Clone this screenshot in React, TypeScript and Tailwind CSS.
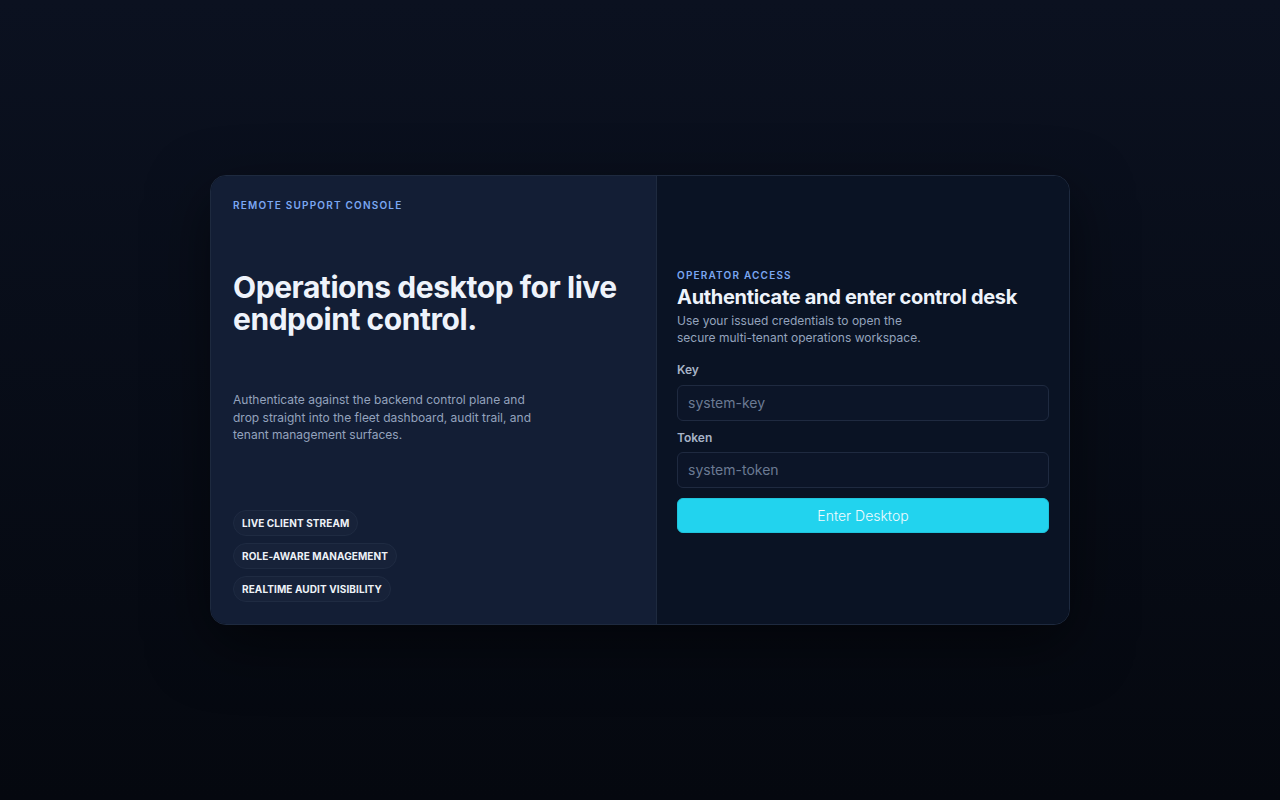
import React from "react";

export default function App() {
  const chips = ["LIVE CLIENT STREAM", "ROLE-AWARE MANAGEMENT", "REALTIME AUDIT VISIBILITY"];
  return (
    <div
      className="w-full h-[800px] flex items-center justify-center bg-gradient-to-b from-[#0b1120] to-[#05080f]"
      style={{ fontFamily: "Inter, 'Noto Sans', sans-serif" }}
    >
      <div className="w-[860px] h-[450px] flex rounded-[16px] border border-[#1e2a3f] overflow-hidden shadow-[0_20px_60px_rgba(0,0,0,0.5)]">
        <div className="w-[446px] bg-[#131e35] border-r border-[#1e2a3f] px-[22px] pt-[22px] pb-[22px] flex flex-col">
          <div className="text-[10px] font-semibold tracking-[0.12em] text-[#7ba7f2] leading-[14px]">
            REMOTE SUPPORT CONSOLE
          </div>
          <h1 className="mt-[59px] text-[30px] font-bold leading-[32px] tracking-[-0.015em] text-[#eef3fb]">
            Operations desktop for live endpoint control.
          </h1>
          <p className="mt-[56px] text-[12px] leading-[17.5px] text-[#94a3bd] max-w-[300px]">
            Authenticate against the backend control plane and drop straight into the fleet dashboard, audit trail, and tenant management surfaces.
          </p>
          <div className="mt-auto flex flex-col items-start gap-[7px]">
            {chips.map((c) => (
              <span
                key={c}
                className="h-[26px] flex items-center px-[8px] rounded-full bg-[#172239] border border-[#1f2b42] text-[10px] font-bold tracking-[0.01em] text-[#eef2f8]"
              >
                {c}
              </span>
            ))}
          </div>
        </div>
        <div className="flex-1 bg-[#0a1324] px-[20px] flex flex-col justify-center">
          <div className="text-[10px] font-semibold tracking-[0.12em] text-[#7ba7f2] leading-[14px]">
            OPERATOR ACCESS
          </div>
          <h2 className="mt-[2px] text-[20px] font-bold leading-[26px] tracking-[-0.015em] text-[#eef3fb]">
            Authenticate and enter control desk
          </h2>
          <p className="mt-[2px] text-[12px] leading-[17px] text-[#94a3bd] max-w-[250px]">
            Use your issued credentials to open the secure multi-tenant operations workspace.
          </p>
          <label className="mt-[16px] text-[12px] font-semibold text-[#a7b3c7] leading-[16px]">Key</label>
          <input
            placeholder="system-key"
            className="mt-[7px] h-[36px] rounded-[6px] border border-[#1f2a40] bg-[#0c1528] px-[10px] text-[14px] text-[#cbd5e1] placeholder:text-[#6b7a93] outline-none"
          />
          <label className="mt-[9px] text-[12px] font-semibold text-[#a7b3c7] leading-[16px]">Token</label>
          <input
            placeholder="system-token"
            className="mt-[6px] h-[36px] rounded-[6px] border border-[#1f2a40] bg-[#0c1528] px-[10px] text-[14px] text-[#cbd5e1] placeholder:text-[#6b7a93] outline-none"
          />
          <button className="mt-[10px] h-[35px] rounded-[6px] bg-[#22d3ee] border border-[#1fc4dd] text-[14px] font-light text-[#f0fbff]">
            Enter Desktop
          </button>
        </div>
      </div>
    </div>
  );
}
